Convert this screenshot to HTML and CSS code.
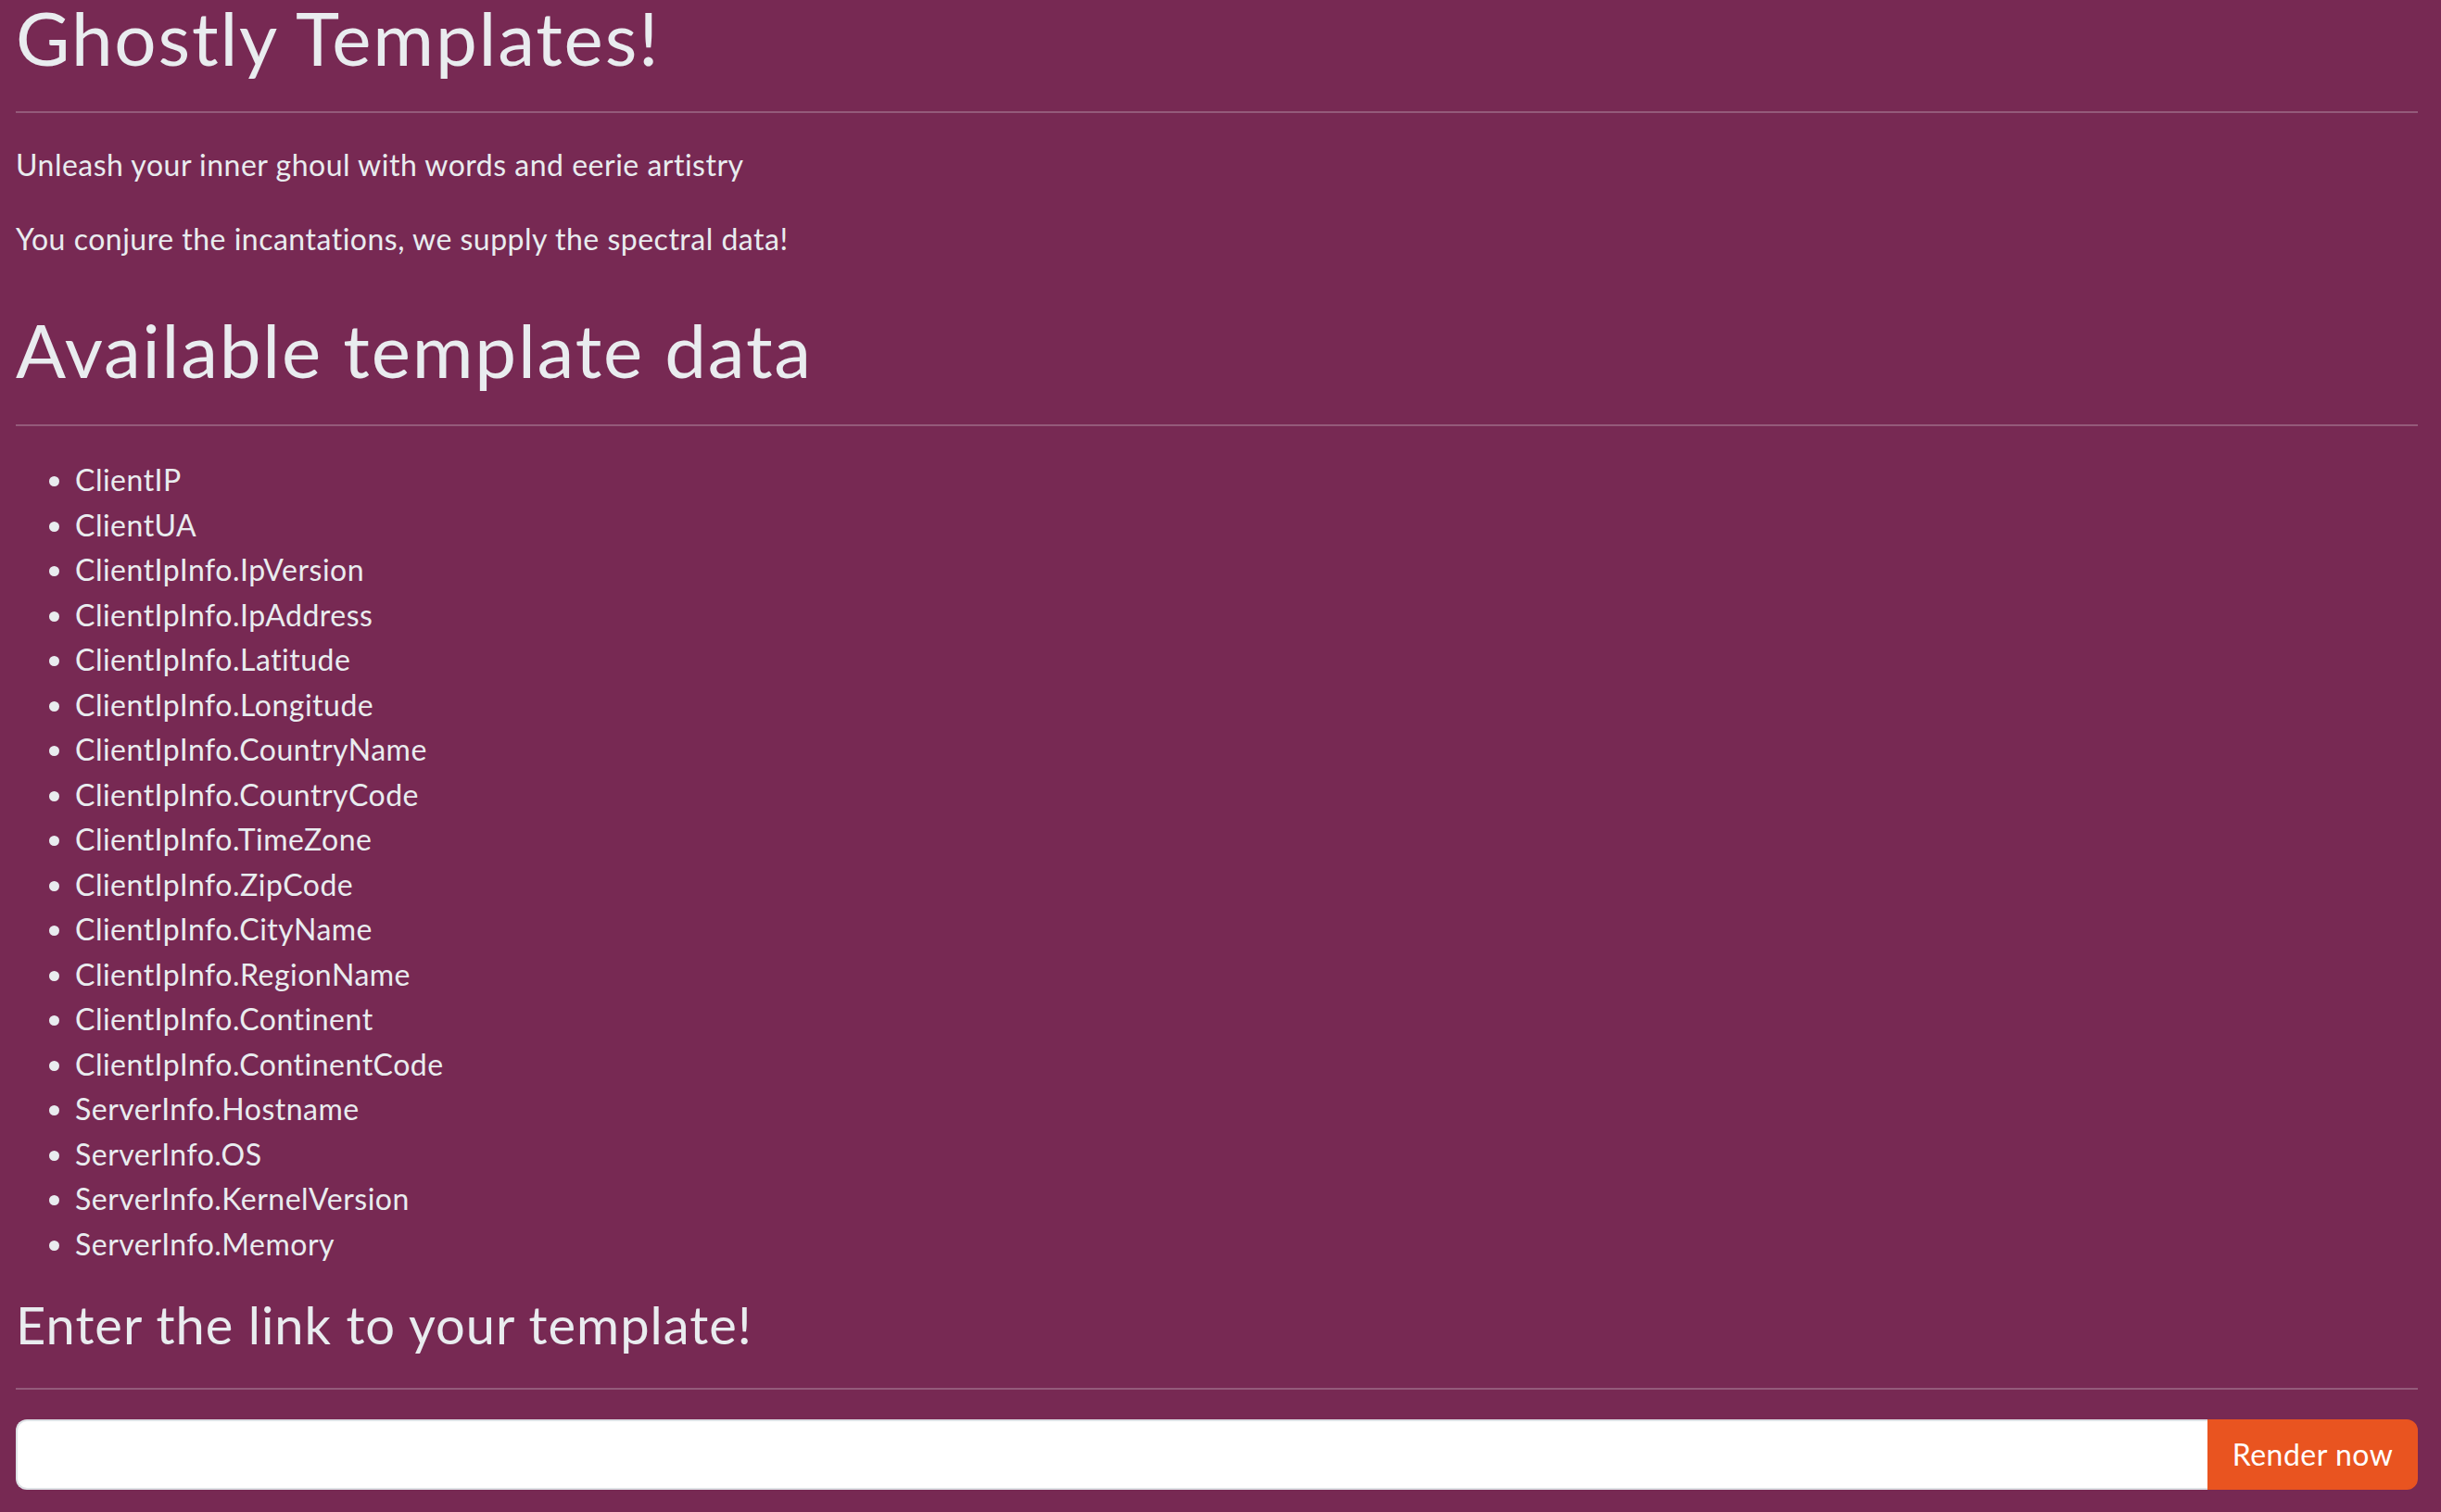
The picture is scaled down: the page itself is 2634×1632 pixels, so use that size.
FILE: index.html
```html
<!DOCTYPE html>
<html lang="en">
<head>
<meta charset="utf-8">
<title>Ghostly Templates!</title>
<link rel="stylesheet" href="styles.css">
</head>
<body class="page">
<main class="container">
  <h1 class="title">Ghostly Templates!</h1>
  <hr class="rule rule-top">
  <p class="text first">Unleash your inner ghoul with words and eerie artistry</p>
  <p class="text second">You conjure the incantations, we supply the spectral data!</p>
  <h1 class="title section">Available template data</h1>
  <hr class="rule rule-mid">
  <ul class="data-list">
    <li>ClientIP</li>
    <li>ClientUA</li>
    <li>ClientIpInfo.IpVersion</li>
    <li>ClientIpInfo.IpAddress</li>
    <li>ClientIpInfo.Latitude</li>
    <li>ClientIpInfo.Longitude</li>
    <li>ClientIpInfo.CountryName</li>
    <li>ClientIpInfo.CountryCode</li>
    <li>ClientIpInfo.TimeZone</li>
    <li>ClientIpInfo.ZipCode</li>
    <li>ClientIpInfo.CityName</li>
    <li>ClientIpInfo.RegionName</li>
    <li>ClientIpInfo.Continent</li>
    <li>ClientIpInfo.ContinentCode</li>
    <li>ServerInfo.Hostname</li>
    <li>ServerInfo.OS</li>
    <li>ServerInfo.KernelVersion</li>
    <li>ServerInfo.Memory</li>
  </ul>
  <h3 class="subtitle">Enter the link to your template!</h3>
  <hr class="rule rule-low">
  <form class="render-form" onsubmit="return false;">
    <input class="link-input" type="text" name="url" aria-label="Template link">
    <button class="render-btn" type="submit">Render now</button>
  </form>
</main>
</body>
</html>
```
FILE: styles.css
```css
html, body {
  margin: 0;
  padding: 0;
}
.page {
  background: #772953;
  color: #e9ecef;
  font-family: Lato, "Open Sans", "DejaVu Sans", sans-serif;
  font-size: 32px;
  line-height: 48px;
  letter-spacing: 0.5px;
  min-height: 1632px;
}
.container {
  padding: 0 25px 0 17px;
  display: flex;
  flex-direction: column;
}
.title {
  font-size: 80px;
  font-weight: 400;
  line-height: 80px;
  letter-spacing: 1.8px;
  margin: 0 0 40px;
}
.title.section {
  margin-top: 55px;
  margin-bottom: 41px;
}
.rule {
  border: 0;
  border-top: 2px solid #945a7a;
  height: 0;
  margin: 0;
}
.text {
  margin: 32px 0 0;
}
.data-list {
  margin: 34px 0 0;
  padding-left: 64px;
}
.data-list li {
  line-height: 48.5px;
}
.subtitle {
  font-size: 56px;
  font-weight: 400;
  line-height: 56px;
  letter-spacing: 1px;
  margin: 35px 0 40px;
}
.render-form {
  display: flex;
  margin-top: 32px;
  height: 76px;
}
.link-input {
  flex: 1;
  min-width: 0;
  box-sizing: border-box;
  height: 76px;
  margin: 0;
  border: 2px solid #dee2e6;
  border-right: 0;
  border-radius: 12px 0 0 12px;
  background: #fff;
  font: inherit;
  padding: 0 24px;
  outline: none;
}
.render-btn {
  box-sizing: border-box;
  height: 76px;
  width: 227px;
  margin: 0;
  border: 2px solid #e95420;
  border-radius: 0 12px 12px 0;
  background: #e95420;
  color: #fff;
  font: inherit;
  letter-spacing: 0.5px;
  padding: 0 20px;
  cursor: pointer;
}
```
